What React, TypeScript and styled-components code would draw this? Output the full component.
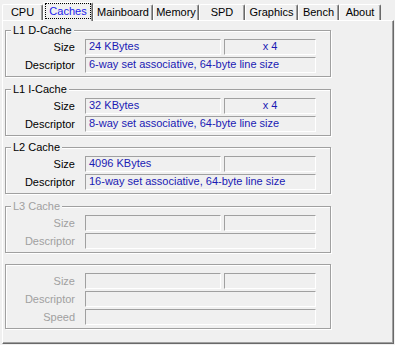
import React from 'react';
import styled, { createGlobalStyle } from 'styled-components';

const GlobalStyle = createGlobalStyle`
  * {
    box-sizing: border-box;
  }
  html,
  body {
    margin: 0;
    padding: 0;
    background: #f0f0f0;
  }
  body {
    font-family: 'Liberation Sans', Arial, sans-serif;
    font-size: 11px;
    color: #000;
  }
`;

const Window = styled.div`
  width: 395px;
  height: 345px;
  padding: 2px 1px 1px 2px;
  display: flex;
  flex-direction: column;
`;

const TabStrip = styled.div`
  display: flex;
  align-items: flex-end;
  height: 18px;
  position: relative;
  z-index: 1;
`;

const Tab = styled.div<{ $w: number; $active?: boolean }>`
  width: ${(p) => p.$w}px;
  height: ${(p) => (p.$active ? 19 : 16)}px;
  margin-bottom: ${(p) => (p.$active ? -1 : 0)}px;
  border: 1px solid #fff;
  border-bottom: none;
  border-right-color: #696969;
  border-radius: 2px 2px 0 0;
  box-shadow: inset -1px 0 0 #a0a0a0;
  background: #f0f0f0;
  text-align: center;
  line-height: 15px;
  white-space: nowrap;
  color: ${(p) => (p.$active ? '#2020ee' : '#000')};
`;

const FocusText = styled.span`
  display: inline-block;
  padding: 0 3px;
  border: 1px dotted #000;
  line-height: 14px;
`;

const Panel = styled.div`
  flex: 1;
  border: 1px solid #fff;
  border-right-color: #696969;
  border-bottom-color: #696969;
  box-shadow: inset -1px -1px 0 #a0a0a0;
  padding: 9px 0 0 2px;
  display: flex;
  flex-direction: column;
  gap: 11.5px;
`;

const Group = styled.div`
  position: relative;
  width: 326px;
  border: 1px solid #a0a0a0;
  box-shadow: inset 1px 1px 0 #fff, 1px 1px 0 #fff;
  padding: 8px 14px 3px 0;
  display: flex;
  flex-direction: column;
  gap: 2px;
`;

const GroupTitle = styled.span<{ $disabled?: boolean }>`
  position: absolute;
  top: -7px;
  left: 5px;
  padding: 0 2px;
  background: #f0f0f0;
  line-height: 13px;
  color: ${(p) => (p.$disabled ? '#a0a0a0' : '#000')};
`;

const Row = styled.div`
  display: flex;
  align-items: flex-start;
  height: 16px;
  gap: 3px;
`;

const Label = styled.div<{ $disabled?: boolean }>`
  width: 69px;
  margin-right: 7px;
  padding-top: 1px;
  text-align: right;
  line-height: 15px;
  white-space: nowrap;
  color: ${(p) => (p.$disabled ? '#a0a0a0' : '#000')};
`;

const Field = styled.div<{ $w: number; $center?: boolean }>`
  width: ${(p) => p.$w}px;
  height: 16px;
  border: 1px solid;
  border-color: #a0a0a0 #fff #fff #a0a0a0;
  padding: 0 3px;
  line-height: 13px;
  color: #1a1ab4;
  text-align: ${(p) => (p.$center ? 'center' : 'left')};
  white-space: nowrap;
  overflow: hidden;
`;

type CacheRow = { label: string; size?: string; count?: string; wide?: string; split?: boolean };
type CacheGroup = { title?: string; disabled?: boolean; rows: CacheRow[] };

const tabs = [
  { name: 'CPU', w: 41 },
  { name: 'Caches', w: 50 },
  { name: 'Mainboard', w: 60 },
  { name: 'Memory', w: 46 },
  { name: 'SPD', w: 46 },
  { name: 'Graphics', w: 53 },
  { name: 'Bench', w: 41 },
  { name: 'About', w: 42 },
];

const groups: CacheGroup[] = [
  {
    title: 'L1 D-Cache',
    rows: [
      { label: 'Size', split: true, size: '24 KBytes', count: 'x 4' },
      { label: 'Descriptor', wide: '6-way set associative, 64-byte line size' },
    ],
  },
  {
    title: 'L1 I-Cache',
    rows: [
      { label: 'Size', split: true, size: '32 KBytes', count: 'x 4' },
      { label: 'Descriptor', wide: '8-way set associative, 64-byte line size' },
    ],
  },
  {
    title: 'L2 Cache',
    rows: [
      { label: 'Size', split: true, size: '4096 KBytes', count: '' },
      { label: 'Descriptor', wide: '16-way set associative, 64-byte line size' },
    ],
  },
  {
    title: 'L3 Cache',
    disabled: true,
    rows: [
      { label: 'Size', split: true },
      { label: 'Descriptor' },
    ],
  },
  {
    disabled: true,
    rows: [{ label: 'Size', split: true }, { label: 'Descriptor' }, { label: 'Speed' }],
  },
];

const App = () => {
  const active = 'Caches';

  return (
    <>
      <GlobalStyle />
      <Window>
        <TabStrip>
          {tabs.map((t) => (
            <Tab key={t.name} $w={t.w} $active={t.name === active}>
              {t.name === active ? <FocusText>{t.name}</FocusText> : t.name}
            </Tab>
          ))}
        </TabStrip>
        <Panel>
          {groups.map((g, i) => (
            <Group key={i}>
              {g.title && <GroupTitle $disabled={g.disabled}>{g.title}</GroupTitle>}
              {g.rows.map((r) => (
                <Row key={r.label}>
                  <Label $disabled={g.disabled}>{r.label}</Label>
                  {r.split ? (
                    <>
                      <Field $w={136}>{r.size}</Field>
                      <Field $w={92} $center>
                        {r.count}
                      </Field>
                    </>
                  ) : (
                    <Field $w={231}>{r.wide}</Field>
                  )}
                </Row>
              ))}
            </Group>
          ))}
        </Panel>
      </Window>
    </>
  );
};

export default App;
